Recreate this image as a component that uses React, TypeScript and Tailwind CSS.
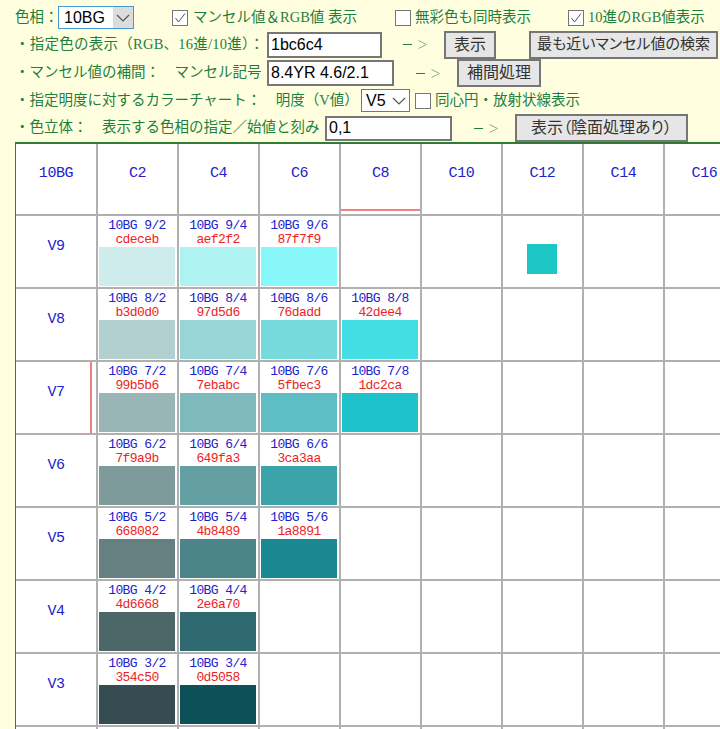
const bodyFont = "font-['Liberation_Serif','Noto_Sans_CJK_JP',serif]";

const columns = ['C2', 'C4', 'C6', 'C8', 'C10', 'C12', 'C14', 'C16'];

const rows: { v: number; colors: string[] }[] = [
  { v: 9, colors: ['cdeceb', 'aef2f2', '87f7f9'] },
  { v: 8, colors: ['b3d0d0', '97d5d6', '76dadd', '42dee4'] },
  { v: 7, colors: ['99b5b6', '7ebabc', '5fbec3', '1dc2ca'] },
  { v: 6, colors: ['7f9a9b', '649fa3', '3ca3aa'] },
  { v: 5, colors: ['668082', '4b8489', '1a8891'] },
  { v: 4, colors: ['4d6668', '2e6a70'] },
  { v: 3, colors: ['354c50', '0d5058'] },
  { v: 2, colors: ['243436', '003840'] },
];

const Check = ({ checked }: { checked?: boolean }) => (
  <span className="flex h-[16px] w-[16px] shrink-0 items-center justify-center border border-[#767676] bg-white">
    {checked && (
      <svg width="12" height="12" viewBox="0 0 12 12" fill="none" stroke="#555" strokeWidth="1">
        <path d="M1.5 6 L4.5 10 L11 1.5" />
      </svg>
    )}
  </span>
);

const Arrow = ({ className }: { className: string }) => (
  <span className={`flex w-[24px] shrink-0 items-center justify-between ${className}`}>
    <span className="h-[1px] w-[9px] bg-[#1e7e3e]" />
    <svg width="9" height="9" viewBox="0 0 9 9" fill="none" stroke="#8fae95" strokeWidth="1">
      <path d="M0.5 0.5 L8.5 4.5 L0.5 8.5" />
    </svg>
  </span>
);

const Button = ({ label, className }: { label: string; className: string }) => (
  <button className={`flex shrink-0 items-center justify-center whitespace-nowrap border-2 border-[#767676] bg-[#e6e6e6] text-[#333] [font-feature-settings:'palt'] ${className}`}>
    {label}
  </button>
);

const TextBox = ({ value, className }: { value: string; className: string }) => (
  <div className={`flex shrink-0 items-center border-2 border-[#767676] bg-white pl-[2px] font-['Liberation_Sans'] text-[16px] text-black ${className}`}>
    {value}
  </div>
);

const Chevron = () => (
  <svg width="14" height="8" viewBox="0 0 14 8" fill="none" stroke="#555" strokeWidth="1.2">
    <path d="M1 1 L7 7 L13 1" />
  </svg>
);

const App = () => {
  return (
    <div className={`h-[729px] w-[720px] overflow-hidden whitespace-nowrap bg-[#ffffe0] text-[14.5px] text-[#1e7e3e] ${bodyFont}`}>
      <div className="h-[142px]">
        <div className="flex h-[30px] items-end pl-[15px]">
          <span className="w-[43px] self-center pt-[6px]">色相：</span>
          <div className="mb-[1px] flex h-[23px] w-[76px] items-center justify-between border border-[#3f9bd1] bg-white pl-[5px] font-['Liberation_Sans'] text-[16px] text-black">
            10BG
            <span className="flex h-full w-[20px] items-center justify-center bg-[#dcdcdc]">
              <Chevron />
            </span>
          </div>
          <div className="ml-[38px] flex items-center gap-[5px] self-center pt-[6px]">
            <Check checked />
            <span className="w-[197px]">マンセル値＆RGB値 表示</span>
            <Check />
            <span className="ml-[-1px] w-[148px]">無彩色も同時表示</span>
            <Check checked />
            <span className="ml-[-1px]">10進のRGB値表示</span>
          </div>
        </div>
        <div className="flex h-[29px] items-center pl-[15px]">
          <span className="w-[252px] tracking-[0.25px]">・指定色の表示（RGB、16進/10進）：</span>
          <TextBox value="1bc6c4" className="h-[26px] w-[115px]" />
          <Arrow className="ml-[21px]" />
          <Button label="表示" className="ml-[17px] h-[28px] w-[52px] text-[16px]" />
          <Button label="最も近いマンセル値の検索" className="ml-[33px] h-[28px] w-[189px] text-[15px]" />
        </div>
        <div className="flex h-[28px] items-center pl-[15px]">
          <span className="w-[252px]">・マンセル値の補間：　マンセル記号</span>
          <TextBox value="8.4YR 4.6/2.1" className="h-[26px] w-[127px]" />
          <Arrow className="ml-[22px]" />
          <Button label="補間処理" className="ml-[17px] h-[28px] w-[84px] text-[16px]" />
        </div>
        <div className="flex h-[27px] items-center pl-[15px]">
          <span className="w-[346px]">・指定明度に対するカラーチャート：　明度（V値）</span>
          <div className="flex h-[23px] w-[49px] items-center justify-between border border-[#767676] bg-white pl-[4px] pr-[3px] font-['Liberation_Sans'] text-[16px] text-black">
            V5
            <Chevron />
          </div>
          <span className="ml-[5px]"><Check /></span>
          <span className="ml-[4px]">同心円・放射状線表示</span>
        </div>
        <div className="flex h-[28px] items-center pl-[15px]">
          <span className="w-[310px]">・色立体：　表示する色相の指定／始値と刻み</span>
          <TextBox value="0,1" className="h-[25px] w-[127px]" />
          <Arrow className="ml-[22px]" />
          <Button label="表示（陰面処理あり）" className="ml-[17px] h-[28px] w-[173px] text-[16px]" />
        </div>
      </div>

      <div className="ml-[15px] border-l border-t-2 border-[#2e7d32] bg-white font-['Liberation_Mono','Noto_Sans_CJK_JP',monospace] text-[13px] tracking-[-0.6px]">
        <div className="grid h-[72px] grid-cols-[82px_repeat(8,81px)]">
          <div className="flex items-start justify-center border-b-2 border-r-2 border-[#b0b0b0] pt-[19px] text-[15px] tracking-[-0.4px] text-[#2222cc]">10BG</div>
          {columns.map((c) => (
            <div
              key={c}
              className="relative flex items-start justify-center border-b-2 border-r-2 border-[#b0b0b0] pt-[19px] text-[15px] tracking-[-0.4px] text-[#2222cc]"
            >
              {c}
              {c === 'C8' && <span className="absolute bottom-[3px] left-0 right-0 h-[2px] bg-[#f08080]" />}
            </div>
          ))}
        </div>
        {rows.map((row) => (
          <div key={row.v} className="grid h-[73px] grid-cols-[82px_repeat(8,81px)]">
            <div className="relative flex items-start justify-center border-b-2 border-r-2 border-[#b0b0b0] pt-[20px] text-[15px] tracking-[-0.4px] text-[#2222cc]">
              V{row.v}
              {row.v === 7 && <span className="absolute bottom-0 right-[4px] top-0 w-[2px] bg-[#f08080]" />}
            </div>
            {columns.map((c, i) => {
              const color = row.colors[i];
              return (
                <div key={c} className="flex flex-col items-center border-b-2 border-r-2 border-[#b0b0b0] pl-[1px] pr-[2px] pt-[2px]">
                  {color && (
                    <>
                      <div className="h-[15px] leading-[15px] text-[#2222cc]">10BG {row.v}/{(i + 1) * 2}</div>
                      <div className="h-[14px] leading-[14px] text-[#ee2222]">{color}</div>
                      <div className="h-[39px] w-full" style={{ backgroundColor: `#${color}` }} />
                    </>
                  )}
                  {row.v === 9 && c === 'C12' && <div className="ml-[-1px] mt-[26px] h-[30px] w-[30px] bg-[#1bc6c4]" />}
                </div>
              );
            })}
          </div>
        ))}
      </div>
    </div>
  );
};

export default App;
